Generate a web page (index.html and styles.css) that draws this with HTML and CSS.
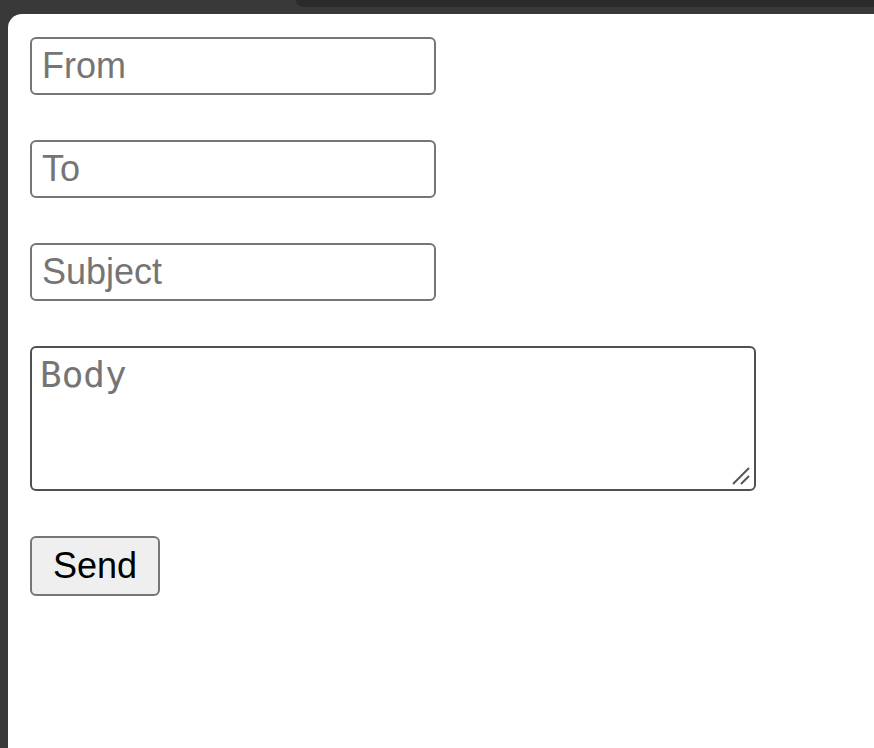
FILE: index.html
```html
<!DOCTYPE html>
<html>
<head>
<meta charset="utf-8">
<link rel="stylesheet" href="styles.css">
</head>
<body>
<div class="topbar"><div class="spacer"></div><div class="tab"></div></div>
<main class="panel">
  <form class="form">
    <input class="field" type="text" placeholder="From">
    <input class="field" type="text" placeholder="To">
    <input class="field" type="text" placeholder="Subject">
    <div class="body-wrap">
      <textarea class="body-field" placeholder="Body"></textarea>
      <svg class="grip" width="22" height="22" viewBox="0 0 22 22" aria-hidden="true">
        <line x1="3" y1="19" x2="19" y2="3" stroke="#555" stroke-width="2"/>
        <line x1="11" y1="19" x2="19" y2="11" stroke="#555" stroke-width="2"/>
      </svg>
    </div>
    <div><button class="send" type="button">Send</button></div>
  </form>
</main>
</body>
</html>
```
FILE: styles.css
```css
html, body {
  margin: 0;
  padding: 0;
  height: 100%;
}
body {
  background: #393939;
  display: flex;
  flex-direction: column;
  overflow: hidden;
}
.topbar {
  display: flex;
  height: 14px;
  flex: 0 0 14px;
}
.spacer {
  width: 296px;
}
.tab {
  flex: 1;
  height: 7px;
  background: #2a2a2a;
  border-bottom-left-radius: 12px;
}
.panel {
  flex: 1;
  margin-left: 8px;
  background: #ffffff;
  border-top-left-radius: 14px;
  padding: 23px 0 0 22px;
}
.form {
  display: flex;
  flex-direction: column;
  align-items: flex-start;
  gap: 45px;
}
.field {
  box-sizing: border-box;
  width: 406px;
  height: 58px;
  margin: 0;
  border: 2px solid #767676;
  border-radius: 6px;
  padding: 0 10px;
  font-family: "Liberation Sans", Arial, sans-serif;
  font-size: 36px;
  color: #000;
  background: #fff;
  outline: none;
}
.field::placeholder,
.body-field::placeholder {
  color: #757575;
  opacity: 1;
}
.body-wrap {
  position: relative;
  width: 726px;
  height: 145px;
}
.body-field {
  box-sizing: border-box;
  display: block;
  width: 726px;
  height: 145px;
  margin: 0;
  border: 2px solid #505050;
  border-radius: 6px;
  padding: 6px 8px;
  font-family: "DejaVu Sans Mono", "Liberation Mono", monospace;
  font-size: 36px;
  line-height: 1.15;
  background: #fff;
  outline: none;
  resize: none;
}
.grip {
  position: absolute;
  right: 4px;
  bottom: 4px;
}
.send {
  box-sizing: border-box;
  width: 130px;
  height: 60px;
  margin: 0;
  border: 2px solid #767676;
  border-radius: 6px;
  background: #efefef;
  color: #000;
  font-family: "Liberation Sans", Arial, sans-serif;
  font-size: 36px;
  padding: 0;
}
```
